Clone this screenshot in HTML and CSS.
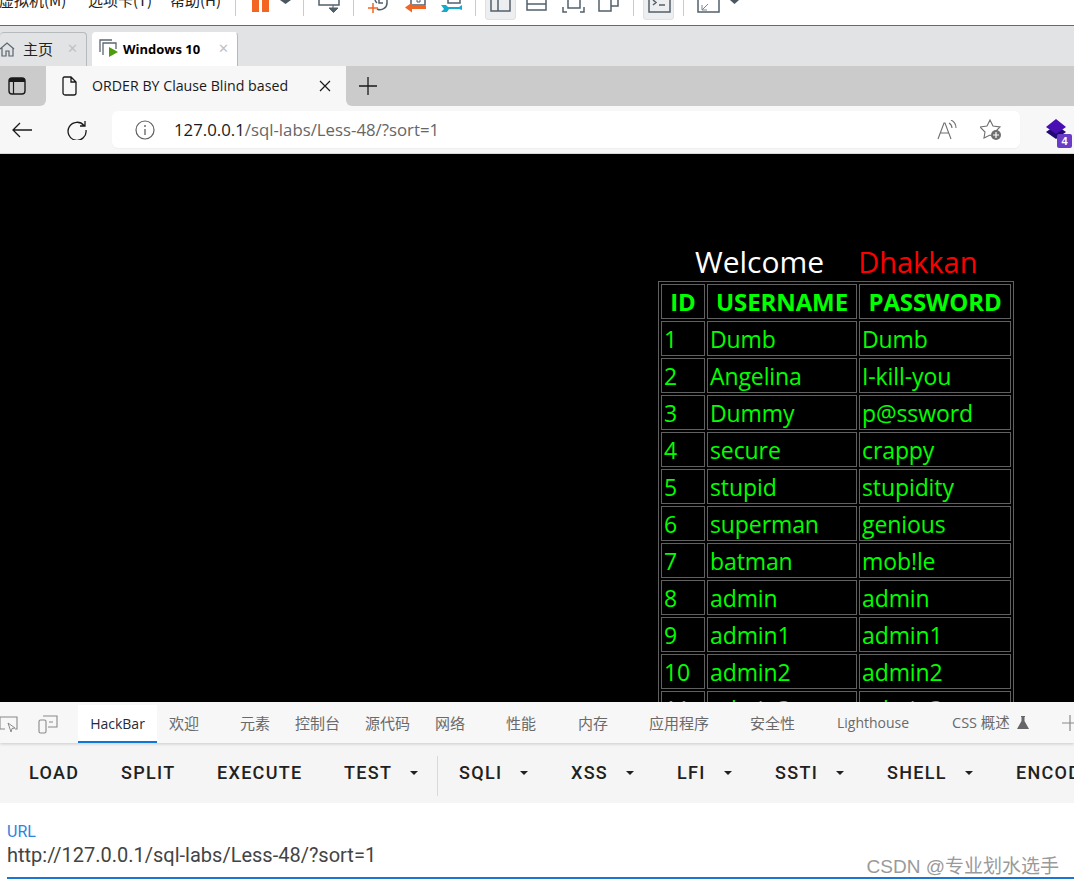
FILE: index.html
```html
<!DOCTYPE html>
<html lang="zh-CN">
<head>
<meta charset="utf-8">
<title>ORDER BY Clause Blind based</title>
<link rel="stylesheet" href="styles.css">
</head>
<body>
<div class="vm-toolbar">
  <span class="vm-menu m1">虚拟机(M)</span><span class="vm-menu m2">选项卡(T)</span><span class="vm-menu m3">帮助(H)</span>
  <i class="vsep s1"></i>
  <svg class="ti t-pause" width="44" height="14" viewBox="0 0 44 14"><rect x="0" y="0" width="7" height="12" fill="#f26522"/><rect x="10" y="0" width="7" height="12" fill="#f26522"/><path d="M28 0h11l-5.500 4z" fill="#4a5660"/></svg>
  <i class="vsep s2"></i>
  <svg class="ti t-snap" width="24" height="14" viewBox="0 0 24 14"><path d="M1 0v5h20V0" fill="none" stroke="#52606b" stroke-width="1.500"/><path d="M15 5v4M11 8h9l-4.500 4.500z" fill="#52606b" stroke="#52606b"/></svg>
  <i class="vsep s3"></i>
  <svg class="ti t-a" width="22" height="14" viewBox="0 0 22 14"><path d="M7 0a6 6 0 0 0 2 3M9 9a7 7 0 0 0 10-7V0M11 0v3h4" fill="none" stroke="#52606b" stroke-width="1.500"/><path d="M5 3v10M0 8h10" stroke="#f26522" stroke-width="1.500"/></svg>
  <svg class="ti t-b" width="24" height="14" viewBox="0 0 24 14"><path d="M6 0v5h14V0" fill="none" stroke="#52606b" stroke-width="1.500"/><path d="M0 7.500l7-5v3.500h14v3H7v3.500z" fill="#f26522"/><path d="M12 0v2h3V0" fill="none" stroke="#52606b"/></svg>
  <svg class="ti t-c" width="24" height="14" viewBox="0 0 24 14"><path d="M8 0v3h12V0" fill="none" stroke="#52606b" stroke-width="1.500"/><path d="M1 5h5l2 2h11l3-2v5l-3-1H9l-2 3H1l3-3z" fill="#15aacb"/></svg>
  <i class="vsep s4"></i>
  <span class="active-btn b1"></span>
  <svg class="ti t-v1" width="22" height="14" viewBox="0 0 22 14"><path d="M1 0v11h19V0M8 0v11" fill="none" stroke="#52606b" stroke-width="1.500"/></svg>
  <svg class="ti t-v2" width="22" height="14" viewBox="0 0 22 14"><path d="M1 0v10h19V0M1 4h19" fill="none" stroke="#52606b" stroke-width="1.500"/></svg>
  <svg class="ti t-v3" width="24" height="14" viewBox="0 0 24 14"><path d="M6 0v8h12V0M1 7v5h4M22 7v5h-4" fill="none" stroke="#52606b" stroke-width="1.500"/></svg>
  <svg class="ti t-v4" width="22" height="14" viewBox="0 0 22 14"><path d="M1 0v11h12V0M13 6h7V0" fill="none" stroke="#52606b" stroke-width="1.500"/></svg>
  <i class="vsep s5"></i>
  <span class="active-btn b2"></span>
  <svg class="ti t-term" width="24" height="14" viewBox="0 0 24 14"><path d="M1 0v12h21V0" fill="none" stroke="#52606b" stroke-width="1.500"/><path d="M5 0l3 2.500-3 2.500M11 5h6" fill="none" stroke="#52606b" stroke-width="1.500"/></svg>
  <i class="vsep s6"></i>
  <svg class="ti t-full" width="46" height="14" viewBox="0 0 46 14"><path d="M1 0v12h21V0" fill="none" stroke="#52606b" stroke-width="1.500"/><path d="M5 10l6-6M5 5v5h5" fill="none" stroke="#7a858d"/><path d="M33 0h9l-4.500 4z" fill="#4a5660"/></svg>
</div>
<div class="vm-tabs">
  <div class="vm-tab home">
    <svg width="16" height="16" viewBox="0 0 16 16"><path d="M0 8l7-6 7 6M2 7v8h4v-5h3v5h4V7" fill="none" stroke="#59656e" stroke-width="1.200"/></svg>
    <span class="vm-tab-label">主页</span><span class="vm-x">✕</span>
  </div>
  <div class="vm-tab current">
    <svg width="20" height="20" viewBox="0 0 20 20"><path d="M1 13V1h12M4 16V4h13v6" fill="none" stroke="#5c666e" stroke-width="1.300"/><path d="M10 8l9 5-9 5z" fill="#4d9c0b"/></svg>
    <span class="vm-tab-label strong">Windows 10</span><span class="vm-x">✕</span>
  </div>
</div>
<div class="edge-tabs">
  <div class="edge-side">
    <svg width="18" height="18" viewBox="0 0 18 18"><rect x="1" y="1" width="16" height="16" rx="3" fill="none" stroke="#1a1a1a" stroke-width="1.400"/><path d="M1 4a3 3 0 0 1 3-3h10a3 3 0 0 1 3 3v1H1z" fill="#1a1a1a"/><path d="M5.500 5v12" stroke="#1a1a1a" stroke-width="1.200"/></svg>
  </div>
  <div class="edge-tab">
    <svg width="16" height="20" viewBox="0 0 16 20"><path d="M2 1h7l5 5v11a2 2 0 0 1-2 2H3a2 2 0 0 1-2-2V2z M9 1v5h5" fill="none" stroke="#1a1a1a" stroke-width="1.300"/></svg>
    <span class="edge-title">ORDER BY Clause Blind based</span>
    <svg class="edge-close" width="12" height="12" viewBox="0 0 12 12"><path d="M1 1l10 10M11 1L1 11" stroke="#1a1a1a" stroke-width="1.200"/></svg>
  </div>
  <div class="edge-rest">
    <svg class="edge-new" width="18" height="18" viewBox="0 0 18 18"><path d="M9 0v18M0 9h18" stroke="#1a1a1a" stroke-width="1.300"/></svg>
  </div>
</div>
<div class="addr-row">
  <svg class="nav-back" width="22" height="18" viewBox="0 0 22 18"><path d="M21 9H2M9 2L2 9l7 7" fill="none" stroke="#1a1a1a" stroke-width="1.300"/></svg>
  <svg class="nav-reload" width="20" height="20" viewBox="0 0 20 20"><path d="M17 5.500A9 9 0 1 0 19 10M18 1v5h-5" fill="none" stroke="#1a1a1a" stroke-width="1.300"/></svg>
  <div class="addr-box">
    <svg width="20" height="20" viewBox="0 0 20 20"><circle cx="10" cy="10" r="9" fill="none" stroke="#5f5f5f" stroke-width="1.200"/><path d="M10 9v6" stroke="#5f5f5f" stroke-width="1.300"/><circle cx="10" cy="6" r=".9" fill="#5f5f5f"/></svg>
    <span class="addr-url"><b>127.0.0.1</b>/sql-labs/Less-48/?sort=1</span>
    <svg class="addr-read" width="20" height="20" viewBox="0 0 20 20"><path d="M1 19L7 3h1l6 16M3.500 13h8" fill="none" stroke="#6f6f6f" stroke-width="1.100"/><path d="M12 3a6 6 0 0 1 3 5M14 0a9 9 0 0 1 5 8" fill="none" stroke="#6f6f6f" stroke-width="1.100"/></svg>
    <svg class="addr-star" width="22" height="22" viewBox="0 0 22 22"><path d="M10 1l3 6 7 1-5 5 1 6-6-3-6 3 1-6-5-5 7-1z" fill="none" stroke="#6f6f6f" stroke-width="1.100"/><circle cx="16" cy="16" r="5" fill="#6f6f6f"/><path d="M16 13v6M13 16h6" stroke="#fff" stroke-width="1.200"/></svg>
  </div>
  <div class="ext">
    <svg width="22" height="22" viewBox="0 0 22 22"><path d="M1 13l10 7 10-7-10-7z" fill="#1f0a72"/><path d="M1 8l10-8 10 8-10 7z" fill="#4a0fb3"/></svg>
    <span class="ext-badge">4</span>
  </div>
</div>
<div class="page">
  <div class="sheet">
    <div class="welcome"><span class="w">Welcome</span><span class="r">Dhakkan</span></div>
    <table class="users">
      <thead><tr><th class="c1">ID</th><th class="c2">USERNAME</th><th class="c3">PASSWORD</th></tr></thead>
      <tbody>
        <tr><td>1</td><td>Dumb</td><td>Dumb</td></tr>
        <tr><td>2</td><td>Angelina</td><td>I-kill-you</td></tr>
        <tr><td>3</td><td>Dummy</td><td>p@ssword</td></tr>
        <tr><td>4</td><td>secure</td><td>crappy</td></tr>
        <tr><td>5</td><td>stupid</td><td>stupidity</td></tr>
        <tr><td>6</td><td>superman</td><td>genious</td></tr>
        <tr><td>7</td><td>batman</td><td>mob!le</td></tr>
        <tr><td>8</td><td>admin</td><td>admin</td></tr>
        <tr><td>9</td><td>admin1</td><td>admin1</td></tr>
        <tr><td>10</td><td>admin2</td><td>admin2</td></tr>
        <tr><td>11</td><td>admin3</td><td>admin3</td></tr>
      </tbody>
    </table>
  </div>
</div>
<div class="dev-tabs">
  <svg class="dev-i1" width="20" height="20" viewBox="0 0 20 20"><path d="M6 15H1V3h17v12h-2" fill="none" stroke="#8a8a8a" stroke-width="1.100"/><path d="M9 9l7 5-3 .5-1 3.500z" fill="none" stroke="#8a8a8a"/></svg>
  <svg class="dev-i2" width="20" height="20" viewBox="0 0 20 20"><rect x="1" y="6" width="7" height="13" rx="1.500" fill="none" stroke="#8a8a8a" stroke-width="1.100"/><path d="M5 2h14v11H10M11 8h4" fill="none" stroke="#8a8a8a" stroke-width="1.100"/></svg>
  <span class="dt on">HackBar</span>
  <span class="dt w-welcome">欢迎</span>
  <span class="dt w-el">元素</span>
  <span class="dt w-con">控制台</span>
  <span class="dt w-src">源代码</span>
  <span class="dt w-net">网络</span>
  <span class="dt w-perf">性能</span>
  <span class="dt w-mem">内存</span>
  <span class="dt w-app">应用程序</span>
  <span class="dt w-sec">安全性</span>
  <span class="dt w-lh">Lighthouse</span>
  <span class="dt w-css">CSS 概述</span>
  <svg class="dev-flask" width="12" height="13" viewBox="0 0 12 13"><path d="M4 0h4v1H7.500v4L12 13H0l4.500-8V1H4z" fill="#666"/></svg>
  <svg class="dev-plus" width="12" height="18" viewBox="0 0 12 18"><path d="M8 1v16M0 9h12" stroke="#8a8a8a" stroke-width="1.200"/></svg>
</div>
<div class="hb-bar">
  <span class="hb b-load">LOAD</span>
  <span class="hb b-split">SPLIT</span>
  <span class="hb b-exec">EXECUTE</span>
  <span class="hb b-test drop">TEST</span>
  <i class="hb-sep"></i>
  <span class="hb b-sqli drop">SQLI</span>
  <span class="hb b-xss drop">XSS</span>
  <span class="hb b-lfi drop">LFI</span>
  <span class="hb b-ssti drop">SSTI</span>
  <span class="hb b-shell drop">SHELL</span>
  <span class="hb b-enc">ENCODING</span>
</div>
<div class="hb-url">
  <label class="url-label">URL</label>
  <div class="url-value">http://127.0.0.1/sql-labs/Less-48/?sort=1</div>
  <span class="mark">CSDN @专业划水选手</span>
</div>
</body>
</html>
```
FILE: styles.css
```css
html,body{margin:0;padding:0;height:886px;overflow:hidden;background:#fff}
body{font-family:"Open Sans","Noto Sans CJK SC",sans-serif;color:#1a1a1a;display:flex;flex-direction:column;width:1074px}
.vm-toolbar{height:25px;flex:none;border-bottom:1px solid #5f6a72;position:relative;overflow:hidden;background:#fff}
.vm-menu{position:absolute;top:-10px;font:15px/20px "Noto Sans CJK SC",sans-serif;color:#222}
.m1{left:-1px}.m2{left:88px}.m3{left:170px}
.vsep{position:absolute;top:0;height:16px;width:1px;background:#c8ccd0}
.s1{left:235px}.s2{left:303px}.s3{left:353px}.s4{left:475px}.s5{left:633px}.s6{left:683px}
.ti{position:absolute;top:0}
.t-pause{left:252px}.t-snap{left:318px}.t-a{left:368px}.t-b{left:405px}.t-c{left:440px}
.t-v1{left:490px}.t-v2{left:526px}.t-v3{left:562px}.t-v4{left:598px}
.t-term{left:648px}.t-full{left:697px}
.active-btn{position:absolute;top:-3px;height:21px;background:#eceef0;border:1px solid #dfe2e5;border-radius:3px}
.b1{left:485px;width:29px}.b2{left:643px;width:29px}
.vm-tabs{height:40px;flex:none;background:#e2e3e5;display:flex;align-items:flex-end;gap:5px}
.vm-tab{height:34px;box-sizing:border-box;display:flex;align-items:center;padding-bottom:2px;border:1px solid #b6babd;border-bottom:0;border-radius:4px 4px 0 0}
.vm-tab.home{width:87px;border-left:0;background:#e2e3e5}
.vm-tab.current{width:146px;background:#fff;border-color:#fff #b6babd #fff #fff;padding-left:6px}
.vm-tab-label{font:15px/18px "Noto Sans CJK SC",sans-serif;margin-left:7px;flex:1;color:#222}
.vm-tab.current .vm-tab-label{margin-left:4px}
.vm-tab-label.strong{font:700 13px/18px "Open Sans",sans-serif;color:#000}
.vm-x{font-size:13px;color:#bfc2c5;margin-right:8px;line-height:1}
.edge-tabs{height:40px;flex:none;background:#f7f7f7;display:flex;align-items:stretch}
.edge-side{width:46px;background:#cbcbcb;border-bottom-right-radius:6px;display:flex;align-items:center;padding-left:8px;box-sizing:border-box}
.edge-tab{width:300px;box-sizing:border-box;background:#f7f7f7;border-radius:8px 8px 0 0;display:flex;align-items:center;padding-left:16px}
.edge-title{font-size:14.200px;margin:-2px 0 0 14px;flex:1;white-space:nowrap;color:#1a1a1a}
.edge-close{margin-right:15px}
.edge-rest{flex:1;background:#cbcbcb;border-bottom-left-radius:6px;display:flex;align-items:center;padding-left:13px}
.addr-row{height:48px;flex:none;box-sizing:border-box;background:#f7f7f7;border-bottom:1px solid #d8d8d8;display:flex;align-items:center}
.nav-back{margin-left:11px}
.nav-reload{margin-left:34px}
.addr-box{margin-left:25px;width:908px;height:37px;box-sizing:border-box;background:#fff;border-radius:6px;display:flex;align-items:center;padding-left:23px;box-shadow:0 1px 1px #eee}
.addr-url{margin-left:19px;font-size:16.800px;color:#666;flex:1;white-space:nowrap}
.addr-url b{font-weight:400;color:#1a1a1a}
.addr-read{margin-right:23px}
.addr-star{margin-right:18px}
.ext{margin-left:24px;position:relative;width:30px;height:24px;padding:1px 0 0 1px;box-sizing:border-box}
.ext-badge{position:absolute;left:13px;top:16px;width:15px;height:14px;background:#6a3bc4;color:#fff;border-radius:2px;font:700 11px/14px "Liberation Sans",sans-serif;text-align:center}
.page{height:548px;flex:none;background:#000;overflow:hidden;display:flex;justify-content:flex-end;padding-right:60px;box-sizing:border-box}
.sheet{width:356px;padding-top:89px}
.welcome{height:38px;display:flex;align-items:baseline;font-size:30px;line-height:38px;padding-left:37px;gap:34px}
.w{color:#fff}
.r{color:#f00;font-size:29px}
.users{border:1px solid #606060;border-spacing:2px;border-collapse:separate;table-layout:fixed;width:356px;color:#00ff00;font-size:23px;letter-spacing:-.1px;line-height:32px}
.users th,.users td{border:1px solid #606060;padding:1px 2px 0;height:32px;white-space:nowrap;overflow:hidden}
.users th{font-weight:700;font-size:24px;line-height:33px;height:33px;text-align:center;padding:0}
.c1{width:42px}.c2{width:148px}.c3{width:150px}
.dev-tabs{height:41px;flex:none;box-sizing:border-box;background:#f7f7f7;position:relative;box-shadow:0 1px 3px rgba(0,0,0,.18);z-index:1;font-size:15px}
.dev-i1,.dev-i2{position:absolute;top:12px}
.dev-i1{left:-1px}.dev-i2{left:38px}
.dt{position:absolute;top:11px;line-height:20px;color:#6a6a6a;white-space:nowrap}
.dt.on{left:78px;top:3px;width:79px;height:36px;line-height:38px;font-size:14px;text-align:center;background:#fff;color:#1f2a3a;border-bottom:2px solid #0f78d4}
.w-welcome{left:169px}.w-el{left:240px}.w-con{left:295px}.w-src{left:365px}.w-net{left:435px}.w-perf{left:506px}.w-mem{left:578px}.w-app{left:649px}.w-sec{left:750px}
.dt.w-lh{left:837px;font-size:14px}
.dt.w-css{left:952px;font-size:14.500px}
.dev-flask{position:absolute;left:1017px;top:14px}
.dev-plus{position:absolute;left:1062px;top:12px}
.hb-bar{height:60px;flex:none;background:#f5f5f5;position:relative;font:500 18px/60px Roboto,sans-serif;letter-spacing:1.300px;color:#212121}
.hb{position:absolute;top:0;white-space:nowrap}
.drop::after{content:"";position:absolute;top:28px;right:-26px;border:4px solid transparent;border-top:4px solid #212121;border-bottom:0}
.b-load{left:29px}.b-split{left:121px}.b-exec{left:217px}.b-test{left:344px}.b-sqli{left:459px}.b-xss{left:571px}.b-lfi{left:677px}.b-ssti{left:775px}.b-shell{left:887px}.b-enc{left:1016px}
.hb-sep{position:absolute;left:437px;top:13px;width:1px;height:40px;background:#d9d9d9}
.hb-url{position:relative;margin-left:7px;background:#fff;border-bottom:2px solid #1976d2;box-sizing:border-box;height:76px;flex:none}
.url-label{position:absolute;left:0;top:20px;font:16px/18px Roboto,sans-serif;color:#2a85dd}
.url-value{position:absolute;left:0;top:39px;font:20px/26px Roboto,sans-serif;color:#444}
.mark{position:absolute;right:15px;top:51px;font:19px/26px "Liberation Sans","Noto Sans CJK SC",sans-serif;color:#9a9a9a}
```
